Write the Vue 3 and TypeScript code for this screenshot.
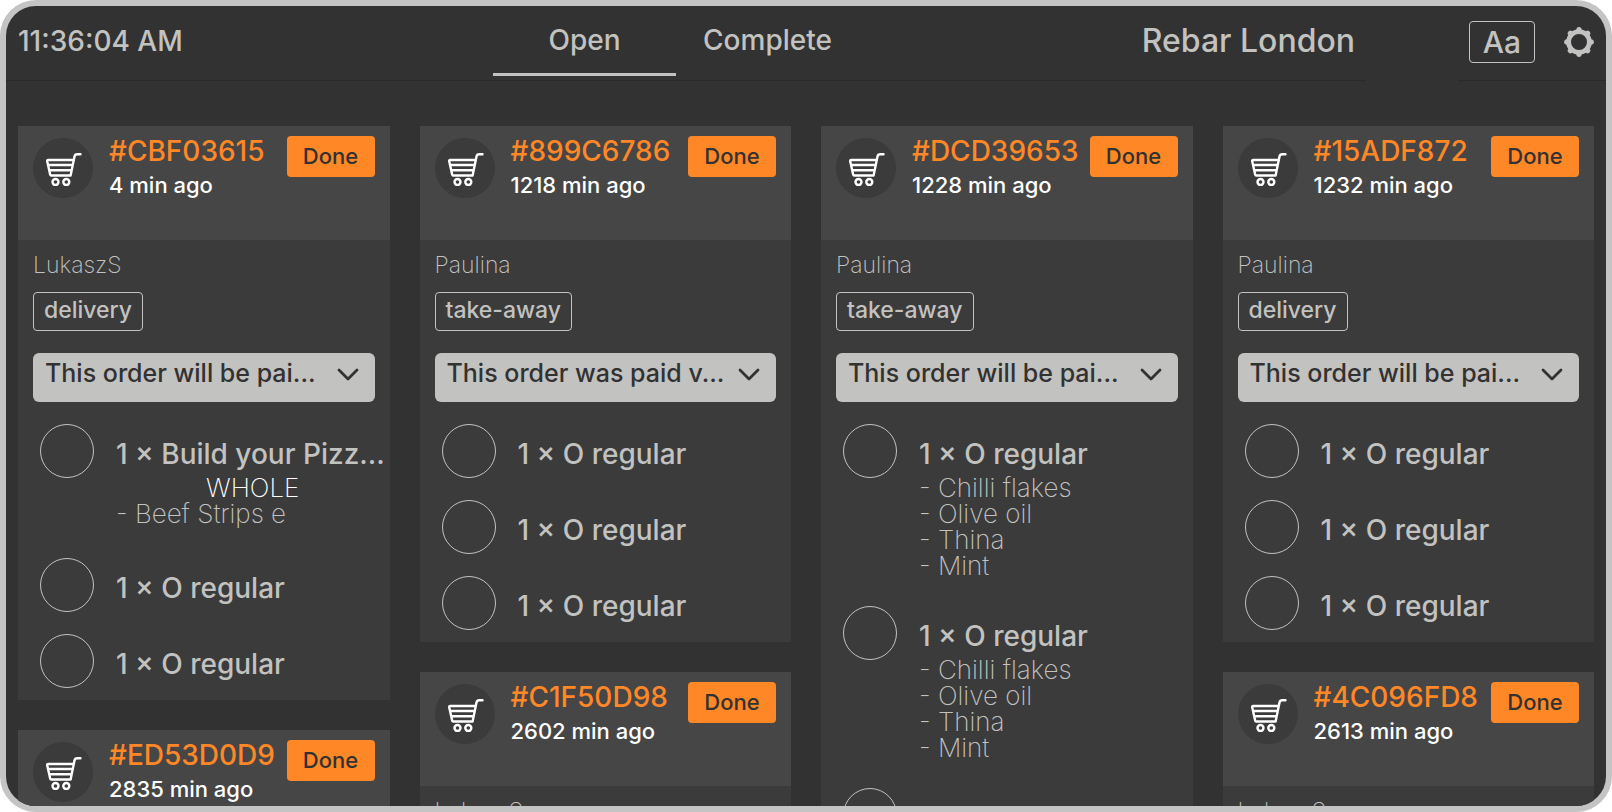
<script setup lang="ts">
import { ref } from 'vue'

interface Item { title: string; part?: string; extras?: string[] }
interface Order {
  id: string
  age: string
  customer: string
  method: string
  payment: string
  items: Item[]
}

const regular: Item = { title: '1 × O regular' }
const topped: Item = { title: '1 × O regular', extras: ['Chilli flakes', 'Olive oil', 'Thina', 'Mint'] }
const unpaid = 'This order will be pai...'

const columns: Order[][] = [
  [
    {
      id: 'CBF03615', age: '4 min ago', customer: 'LukaszS', method: 'delivery', payment: unpaid,
      items: [{ title: '1 × Build your Pizz...', part: 'WHOLE', extras: ['Beef Strips e'] }, regular, regular],
    },
    { id: 'ED53D0D9', age: '2835 min ago', customer: '', method: '', payment: '', items: [] },
  ],
  [
    {
      id: '899C6786', age: '1218 min ago', customer: 'Paulina', method: 'take-away',
      payment: 'This order was paid v...', items: [regular, regular, regular],
    },
    { id: 'C1F50D98', age: '2602 min ago', customer: 'LukaszS', method: '', payment: '', items: [] },
  ],
  [
    {
      id: 'DCD39653', age: '1228 min ago', customer: 'Paulina', method: 'take-away', payment: unpaid,
      items: [topped, topped, regular],
    },
  ],
  [
    {
      id: '15ADF872', age: '1232 min ago', customer: 'Paulina', method: 'delivery', payment: unpaid,
      items: [regular, regular, regular],
    },
    { id: '4C096FD8', age: '2613 min ago', customer: 'LukaszS', method: '', payment: '', items: [] },
  ],
]

const tabs = ['Open', 'Complete']
const activeTab = ref('Open')
const teeth = [0, 45, 90, 135, 180, 225, 270, 315]
</script>

<template>
  <div class="screen">
    <header class="bar">
      <time class="clock">11:36:04 AM</time>
      <nav class="tabs" role="tablist">
        <button
          v-for="tab in tabs" :key="tab" type="button" role="tab" class="tab"
          :class="{ active: tab === activeTab }" :aria-selected="tab === activeTab"
          @click="activeTab = tab"
        >{{ tab }}</button>
      </nav>
      <h1 class="venue">Rebar London</h1>
      <div></div>
      <div class="actions">
        <button type="button" class="text-size">Aa</button>
        <button type="button" class="settings" aria-label="Settings">
          <svg viewBox="0 0 30 30" width="30" height="30" aria-hidden="true">
            <circle cx="15" cy="15" r="10.4" fill="none" stroke="currentColor" stroke-width="4.8" />
            <path
              v-for="angle in teeth" :key="angle" d="M11 4 12.500 2.400 12.700 1Q15-.8 17.300 1L17.500 2.400 19 4Z"
              fill="currentColor" :transform="`rotate(${angle} 15 15)`"
            />
          </svg>
        </button>
      </div>
    </header>

    <main class="board">
      <div v-for="(column, c) in columns" :key="c" class="column">
        <article v-for="order in column" :key="order.id" class="card">
          <div class="card-head">
            <span class="badge">
              <svg viewBox="0 0 38 36" width="38" height="36" fill="none" stroke="#fff" stroke-width="2.400" stroke-linecap="round" stroke-linejoin="round" aria-hidden="true">
                <path d="M36.500 4.200h-3.200q-2.300 0-2.800 2.300L26.600 25.500H7.200Q6.400 25.500 6.200 24.700L3.200 11.200Q3 10 4.200 10H29M4.200 15H28M5.300 20.200H27" />
                <circle cx="11.500" cy="32" r="3" />
                <circle cx="22.300" cy="32" r="3" />
              </svg>
            </span>
            <div class="ident">
              <h2 class="order-id">#{{ order.id }}</h2>
              <p class="age">{{ order.age }}</p>
            </div>
            <button type="button" class="done">Done</button>
          </div>
          <div class="card-body">
            <p v-if="order.customer" class="customer">{{ order.customer }}</p>
            <span v-if="order.method" class="method">{{ order.method }}</span>
            <div v-if="order.payment" class="payment">
              <select class="payment-select" aria-label="Payment">
                <option>{{ order.payment }}</option>
              </select>
              <svg class="chevron" viewBox="0 0 22 14" width="22" height="14" aria-hidden="true">
                <path d="M2 2l9 9 9-9" fill="none" stroke="#323232" stroke-width="2.800" stroke-linecap="round" stroke-linejoin="round" />
              </svg>
            </div>
            <ul v-if="order.items.length" class="items">
              <li v-for="(item, i) in order.items" :key="i" class="item">
                <input :id="`${order.id}-${i}`" type="checkbox" class="tick">
                <div class="detail">
                  <label class="title" :for="`${order.id}-${i}`">{{ item.title }}</label>
                  <div v-if="item.extras" class="extras" :class="{ grouped: item.part }">
                    <p v-if="item.part" class="part">{{ item.part }}</p>
                    <p v-for="extra in item.extras" :key="extra" class="extra">- {{ extra }}</p>
                  </div>
                </div>
              </li>
            </ul>
          </div>
        </article>
      </div>
    </main>
  </div>
</template>

<style>
body { background: #fff; }
</style>

<style scoped>
* { box-sizing: border-box; margin: 0; padding: 0; }
button, input, select { font: inherit; }
button { cursor: pointer; }

.screen {
  height: 100vh;
  overflow: hidden;
  border: 6px solid #c4c4c4;
  border-radius: 36px;
  background: #323232;
  color: #c2c2c0;
  font-family: Inter, "Liberation Sans", sans-serif;
  font-weight: 500;
}

.bar {
  display: grid;
  grid-template-columns: 487fr 366px 507fr 92px 148px;
  height: 75px;
}
.bar > * { border-bottom: 1px solid #2a2a2a; }
.bar > div:not(.actions) { border-bottom: 0; }
.clock { padding-left: 12px; font-size: 28px; line-height: 70px; }
.tabs { display: flex; }
.tab {
  flex: 1;
  height: 70px;
  padding-top: 2px;
  border: 0;
  border-bottom: 3px solid transparent;
  background: none;
  color: inherit;
  font-size: 28px;
  line-height: 65px;
}
.tab.active { border-bottom-color: #c2c2c0; }
.venue { padding-right: 11px; font-size: 32px; font-weight: 500; line-height: 70px; text-align: right; }
.actions {
  display: flex;
  align-items: center;
  justify-content: space-between;
  padding: 0 12px 2px 11px;
}
.text-size {
  width: 66px;
  height: 42px;
  border: 1px solid #c2c2c0;
  border-radius: 4px;
  background: none;
  color: inherit;
  font-size: 30px;
  line-height: 38px;
}
.settings { border: 0; background: none; color: inherit; }
.settings svg { display: block; }

.board {
  display: grid;
  grid-template-columns: repeat(4, minmax(0, 1fr));
  align-items: start;
  gap: 30px;
  padding: 45px 12px 0;
}
.column { display: grid; gap: 30px; }
.card { background: #3b3b3b; }
.card-head {
  display: flex;
  align-items: flex-start;
  height: 114px;
  padding: 10px 15px;
  background: #464646;
}
.badge {
  display: flex;
  flex: none;
  align-items: center;
  justify-content: center;
  width: 60px;
  height: 60px;
  margin: 2px 16px 0 0;
  border-radius: 50%;
  background: #3b3b3b;
}
.ident { flex: 1; min-width: 0; white-space: nowrap; }
.order-id { color: #ff8726; font-size: 28px; font-weight: 500; line-height: 30px; }
.age { color: #fff; font-size: 22px; line-height: 38px; }
.done {
  flex: none;
  width: 88px;
  height: 41px;
  border: 0;
  border-radius: 4px;
  background: #ff8726;
  color: #323232;
  font-size: 22px;
  line-height: 39px;
}

.card-body { padding: 9px 15px 0; }
.customer { font-size: 23px; font-weight: 200; line-height: 32px; }
.method {
  display: block;
  width: fit-content;
  height: 39px;
  margin-top: 11px;
  padding: 0 10px;
  border: 1px solid #c2c2c0;
  border-radius: 4px;
  font-size: 23px;
  line-height: 35px;
}
.payment { position: relative; margin-top: 22px; }
.payment-select {
  display: block;
  width: 100%;
  height: 49px;
  padding: 0 48px 10px 12px;
  border: 0;
  border-radius: 6px;
  background: #c2c2c0;
  color: #323232;
  appearance: none;
  font-size: 25px;
}
.chevron { position: absolute; top: 15px; right: 16px; pointer-events: none; }
.items { padding: 22px 0 12px 7px; list-style: none; }
.item { display: flex; align-items: flex-start; gap: 22px; min-height: 76px; }
.item:last-child { min-height: 54px; }
.tick {
  flex: none;
  width: 54px;
  height: 54px;
  border: 1px solid #c2c2c0;
  border-radius: 50%;
  appearance: none;
}
.detail { flex: 1; min-width: 0; margin-right: -15px; white-space: nowrap; }
.title { display: block; padding-top: 11px; font-size: 28px; line-height: 38px; }
.extras { padding: 2px 0 27px; font-size: 26px; font-weight: 200; line-height: 26px; }
.extras.grouped { padding-bottom: 31px; }
.part { color: #fff; text-align: center; }
</style>
